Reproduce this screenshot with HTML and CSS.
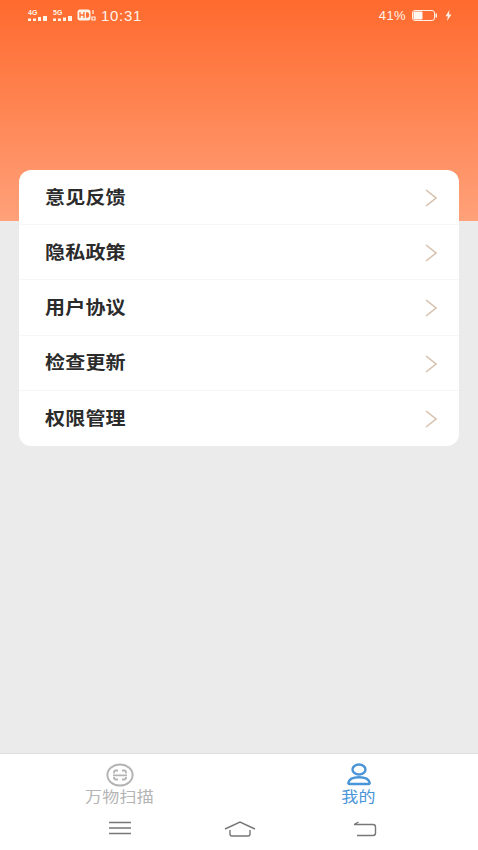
FILE: index.html
```html
<!DOCTYPE html>
<html lang="zh">
<head>
<meta charset="utf-8">
<title>我的</title>
<link rel="stylesheet" href="styles.css">
</head>
<body>
<div class="page">
  <header class="hero">
    <div class="status">
      <div class="status-left">
        <span class="net"><span class="net-label">4G</span><svg class="bars" viewBox="0 0 20 5"><path d="M0 2.500h3V5H0zM5 2.500h3V5H5zM10 1h3v4h-3zM15 0h4v5h-4z"/></svg></span>
        <span class="net"><span class="net-label">5G</span><svg class="bars" viewBox="0 0 20 5"><path d="M0 2.500h3V5H0zM5 2.500h3V5H5zM10 1.500h3V5h-3zM15 0h4v5h-4z"/></svg></span>
        <svg class="hd" viewBox="0 0 19 12"><rect x="0.5" y="0.5" width="13" height="11" rx="2.500" fill="#fff3e8"/><path d="M3 3v6M7 3v6M3 6h4" stroke="#ff7034" stroke-width="1.300" fill="none"/><path d="M9 3.200h1.500q1.700 0 1.700 2.800t-1.700 2.800H9z" fill="#ff7034"/><path d="M16 1v4M15 8h3v3h-3z" stroke="#fff3e8" stroke-width="1.200" fill="none"/></svg>
        <span class="time">10:31</span>
      </div>
      <div class="status-right">
        <span class="pct">41%</span>
        <svg class="battery" viewBox="0 0 26 11"><rect x="0.500" y="0.500" width="22" height="10" rx="2.500" fill="none" stroke="#fff1e6"/><rect x="1.500" y="1.500" width="9" height="8" rx="1" fill="#fff8f2"/><rect x="23.500" y="3.500" width="1.500" height="4" fill="#fff1e6"/></svg>
        <svg class="bolt" viewBox="0 0 7 11"><path d="M4.500 0 0.500 6.200h2.400L2 11l4.500-6.600H4z" fill="#fff1e6"/></svg>
      </div>
    </div>
  </header>

  <main class="content">
    <ul class="card">
      <li class="row"><span class="row-text">意见反馈</span><svg class="chev" viewBox="0 0 12 18"><path d="M1 1l10 8-10 8"/></svg></li>
      <li class="row"><span class="row-text">隐私政策</span><svg class="chev" viewBox="0 0 12 18"><path d="M1 1l10 8-10 8"/></svg></li>
      <li class="row"><span class="row-text">用户协议</span><svg class="chev" viewBox="0 0 12 18"><path d="M1 1l10 8-10 8"/></svg></li>
      <li class="row"><span class="row-text">检查更新</span><svg class="chev" viewBox="0 0 12 18"><path d="M1 1l10 8-10 8"/></svg></li>
      <li class="row"><span class="row-text">权限管理</span><svg class="chev" viewBox="0 0 12 18"><path d="M1 1l10 8-10 8"/></svg></li>
    </ul>
  </main>

  <footer class="footer">
    <nav class="tabs">
      <div class="tab">
        <svg class="tab-icon" viewBox="0 0 28 24"><g fill="none" stroke="#b4b4b4"><ellipse cx="14" cy="12" rx="12.600" ry="10.600" stroke-width="2"/><path d="M8 10.500V9.500Q8 7.500 10 7.500h2M16 7.500h2q2 0 2 2v1M8 14v.5q0 2 2 2h2M16 16.500h2q2 0 2-2V14M7 12.300h14" stroke-width="1.800"/></g></svg>
        <span class="tab-label">万物扫描</span>
      </div>
      <div class="tab active">
        <svg class="tab-icon" viewBox="0 0 28 24"><g fill="none" stroke="#4a94d8" stroke-width="2.400"><ellipse cx="14" cy="6.500" rx="6.500" ry="5"/><path d="M4.500 21h19q1.500 0 1.100-1.500C23.800 16.300 20 14.200 14 14.200S4.200 16.300 3.400 19.500Q3 21 4.500 21z"/></g></svg>
        <span class="tab-label">我的</span>
      </div>
    </nav>
    <div class="sysnav">
      <svg class="sys menu" viewBox="0 0 24 14"><path d="M1 1.500h22M1 7h22M1 12.500h22"/></svg>
      <svg class="sys home" viewBox="0 0 32 16"><path d="M1 8 16 1l15 7M6 9v4q0 2 2 2h16q2 0 2-2V9"/></svg>
      <svg class="sys back" viewBox="0 0 24 16"><path d="M1 3.500h19q2.500 0 2.500 2.500v6q0 2.500-2.500 2.500H4M1 3.500 5.500 1"/></svg>
    </div>
  </footer>
</div>
</body>
</html>
```

FILE: styles.css
```css
* { box-sizing: border-box; }
html, body { margin: 0; padding: 0; }
body { font-family: "Noto Sans CJK SC", "Noto Sans", sans-serif; background: #ebebeb; }
.page { width: 478px; height: 850px; display: flex; flex-direction: column; overflow: hidden; }

.hero { height: 221px; flex: none; background: linear-gradient(180deg, #ff6a2e 0%, #ff7d48 35%, #ffa17a 100%); }
.status { height: 30px; display: flex; justify-content: space-between; align-items: center; padding: 0 26px 0 28px; color: #fff3e8; }
.status-left, .status-right { display: flex; align-items: center; }
.net { display: flex; flex-direction: column; width: 21px; margin-right: 4px; line-height: 1; }
.net-label { font: 700 7px/6px "Liberation Sans", sans-serif; height: 6px; }
.bars { width: 20px; height: 5px; fill: #fff3e8; }
.hd { width: 19px; height: 12px; margin-left: -1px; }
.time { font: 15px/1 "Liberation Sans", sans-serif; letter-spacing: .7px; margin-left: 5px; }
.pct { font: 13px/1 "Liberation Sans", sans-serif; letter-spacing: .4px; }
.battery { width: 26px; height: 11px; margin-left: 6px; }
.bolt { width: 7px; height: 11px; margin-left: 7px; }

.content { flex: 1; padding: 0 19px; }
.card { list-style: none; margin: -51px 0 0; padding: 0; background: #fff; border-radius: 12px; }
.row { height: 55.2px; display: flex; align-items: center; justify-content: space-between; padding: 0 22px 0 26px; font-weight: 700; color: #2b2b2b; border-bottom: 1px solid #f6f6f6; }
.row:last-child { border-bottom: 0; }
.row-text { display: block; font-size: 20px; letter-spacing: .2px; line-height: 24px; padding-bottom: 1px; transform: scaleY(.9); }
.chev { width: 12px; height: 18px; margin-top: 2px; fill: none; stroke: #d6c0ac; stroke-width: 1.5; }

.footer { height: 97px; flex: none; background: #fff; border-top: 1px solid #dedede; }
.tabs { display: flex; height: 53px; padding-top: 9px; }
.tab { flex: 1; display: flex; flex-direction: column; align-items: center; }
.tab-icon { width: 28px; height: 24px; display: block; }
.tab-label { display: block; font-size: 17px; line-height: 20px; margin-top: -1px; color: #b4b4b4; letter-spacing: .3px; transform: scaleY(.85); }
.active .tab-label { color: #4a94d8; }
.sysnav { display: flex; padding-top: 14px; height: 43px; }
.sys { fill: none; stroke: #777; stroke-width: 1.4; flex: none; }
.menu { width: 24px; height: 14px; margin-left: 108px; }
.home { width: 32px; height: 16px; margin-left: 92px; }
.back { width: 24px; height: 16px; margin-left: 97px; }
```
